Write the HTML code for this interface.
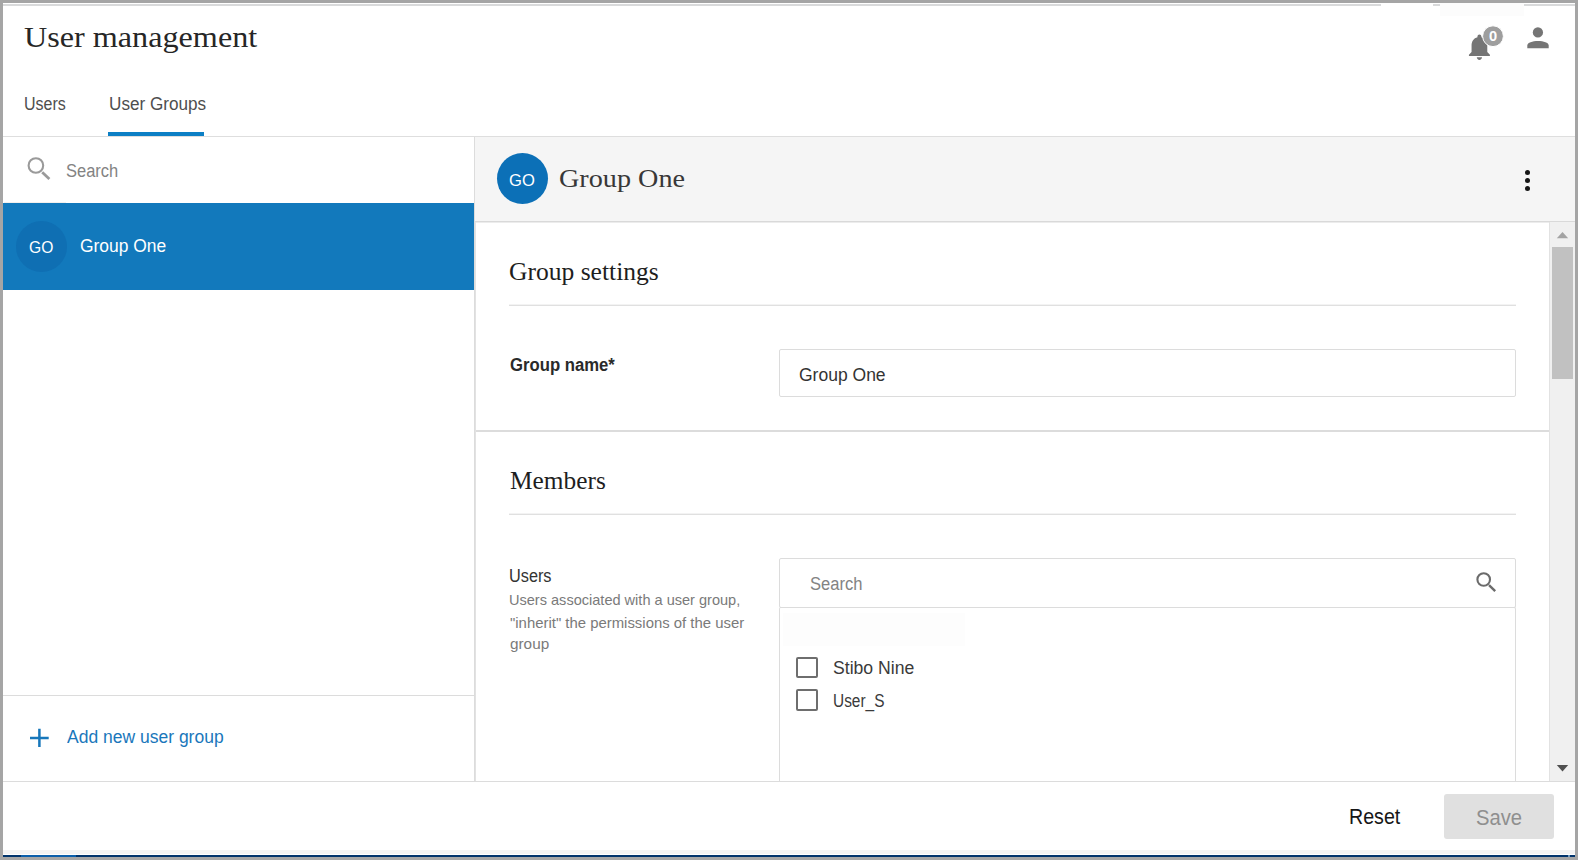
<!DOCTYPE html>
<html><head><meta charset="utf-8"><title>User management</title>
<style>
*{box-sizing:border-box;margin:0;padding:0}
html,body{width:1578px;height:860px;overflow:hidden;background:#a5a5a5;font-family:"Liberation Sans",sans-serif}
.r{position:absolute}
.t{position:absolute;white-space:pre;transform-origin:0 0}
</style></head><body>
<div class="r" style="left:3px;top:3px;width:1572px;height:854px;background:#fff"></div>
<!-- top strip lines -->
<div class="r" style="left:3px;top:4px;width:1378px;height:2px;background:#d9dadb"></div>
<div class="r" style="left:1433px;top:4px;width:7px;height:2px;background:#d9dadb"></div>
<div class="r" style="left:1524px;top:4px;width:51px;height:2px;background:#d9dadb"></div>
<div class="r" style="left:1440px;top:3px;width:84px;height:12.5px;background:#fcfcfc"></div>
<!-- header divider -->
<div class="r" style="left:3px;top:136px;width:1572px;height:1px;background:#dedede"></div>
<div class="r" style="left:108px;top:132px;width:96px;height:4px;background:#0c7fc5"></div>
<!-- left panel -->
<div class="r" style="left:474px;top:137px;width:1px;height:644px;background:#dcdcdc"></div>
<div class="r" style="left:4px;top:202px;width:62px;height:1px;background:#f3f0ed"></div>
<div class="r" style="left:3px;top:203px;width:471px;height:87px;background:#1279bc"></div>
<div class="r" style="left:15.9px;top:220.9px;width:50.7px;height:50.7px;border-radius:50%;background:#0f6fb3"></div>
<div class="r" style="left:3px;top:695px;width:471px;height:1px;background:#dcdcdc"></div>
<!-- right header -->
<div class="r" style="left:475px;top:137px;width:1100px;height:84px;background:#f5f5f5"></div>
<div class="r" style="left:475px;top:221px;width:1100px;height:1px;background:#d9d9d9"></div>
<div class="r" style="left:476px;top:222px;width:1073px;height:1px;background:#ececec"></div>
<div class="r" style="left:497px;top:153px;width:51px;height:51px;border-radius:50%;background:#0c70b7"></div>
<div class="r" style="left:1524.8px;top:170.4px;width:5px;height:5px;border-radius:50%;background:#161616"></div>
<div class="r" style="left:1524.8px;top:178.4px;width:5px;height:5px;border-radius:50%;background:#161616"></div>
<div class="r" style="left:1524.8px;top:186.4px;width:5px;height:5px;border-radius:50%;background:#161616"></div>
<!-- scrollbar -->
<div class="r" style="left:1549px;top:222px;width:26px;height:559px;background:#f0f0f0;border-left:1px solid #e2e2e2"></div>
<div class="r" style="left:1552px;top:247px;width:21px;height:132px;background:#c1c1c1"></div>
<svg class="r" style="left:1549px;top:222px" width="26" height="559">
  <path d="M7.8 16.2 L13.5 10 L19.2 16.2 Z" fill="#a3a3a3"/>
  <path d="M7.8 543 L13.5 549.5 L19.2 543 Z" fill="#505050"/>
</svg>
<!-- content -->
<div class="r" style="left:509px;top:304px;width:1007px;height:1px;background:#f3f3f3"></div>
<div class="r" style="left:509px;top:305px;width:1007px;height:1px;background:#e0e0e0"></div>
<div class="r" style="left:779px;top:349px;width:737px;height:48px;border:1px solid #dcdcdc;border-radius:2px"></div>
<div class="r" style="left:475px;top:430px;width:1074px;height:2px;background:#dcdcdc"></div>
<div class="r" style="left:475px;top:222px;width:1px;height:559px;background:#e2e2e2"></div>
<div class="r" style="left:509px;top:513px;width:1007px;height:1px;background:#f3f3f3"></div>
<div class="r" style="left:509px;top:514px;width:1007px;height:1px;background:#e0e0e0"></div>
<div class="r" style="left:779px;top:558px;width:737px;height:50px;border:1px solid #dcdcdc;border-radius:2px"></div>
<div class="r" style="left:779px;top:607px;width:737px;height:174px;border:1px solid #dcdcdc;border-bottom:none;border-radius:2px 2px 0 0"></div>
<div class="r" style="left:783px;top:613px;width:182px;height:33px;background:#fdfdfd"></div>
<div class="r" style="left:796px;top:657px;width:21.5px;height:21px;border:2px solid #6e6e6e;border-radius:2px"></div>
<div class="r" style="left:796px;top:689.3px;width:21.5px;height:21.3px;border:2px solid #6e6e6e;border-radius:2px"></div>
<svg class="r" style="left:1470px;top:566px" width="30" height="30">
  <circle cx="13.7" cy="13.5" r="6.3" fill="none" stroke="#6b6b6b" stroke-width="2.1"/>
  <path d="M19 19.2 L25.2 25.2" stroke="#6b6b6b" stroke-width="2.4"/>
</svg>
<!-- left search icon -->
<svg class="r" style="left:20px;top:150px" width="40" height="40">
  <circle cx="15.9" cy="15.5" r="7.3" fill="none" stroke="#9a9a9a" stroke-width="2.1"/>
  <path d="M22.2 22.2 L29.4 28.9" stroke="#9a9a9a" stroke-width="2.8"/>
</svg>
<!-- plus icon -->
<svg class="r" style="left:20px;top:720px" width="40" height="40">
  <path d="M19.4 8.7 V27 M10 17.9 H28.7" stroke="#1777bb" stroke-width="2.5"/>
</svg>
<!-- footer -->
<div class="r" style="left:3px;top:781px;width:1572px;height:1px;background:#dcdcdc"></div>
<div class="r" style="left:3px;top:850px;width:1572px;height:4px;background:#f3f3f3"></div>
<div class="r" style="left:3px;top:855px;width:1572px;height:2px;background:#00336b"></div>
<div class="r" style="left:21px;top:855px;width:55px;height:2px;background:#0a5eaa"></div>
<div class="r" style="left:1568px;top:855px;width:2px;height:2px;background:#6f98bd"></div>
<div class="r" style="left:1444px;top:794px;width:110px;height:45px;background:#e0e0e0;border-radius:3px"></div>
<!-- header icons -->
<svg class="r" style="left:1460px;top:20px" width="100" height="45" viewBox="1460 20 100 45">
  <g transform="translate(1463.7 31.1) scale(1.31)">
    <path d="M12 22c1.1 0 2-.9 2-2h-4c0 1.1.89 2 2 2zm6-6v-5c0-3.07-1.64-5.64-4.5-6.32V4c0-.83-.67-1.5-1.5-1.5s-1.5.67-1.5 1.5v.68C7.63 5.36 6 7.92 6 11v5l-2 2v1h16v-1l-2-2z" fill="#757575"/>
  </g>
  <circle cx="1493" cy="36.2" r="10.4" fill="#9e9e9e" stroke="#fff" stroke-width="1"/>
  <circle cx="1537.9" cy="32.4" r="5.15" fill="#757575"/>
  <path d="M1527.3 48.3 V45.4 C1527.3 42.5 1532.5 40.9 1538 40.9 C1543.5 40.9 1548.7 42.5 1548.7 45.4 V48.3 Z" fill="#757575"/>
</svg>
<div class="t" style="left:24.00px;top:16.51px;font:400 29px/41px 'Liberation Serif', serif;color:#262626;transform:scaleX(1.1096)">User management</div>
<div class="t" style="left:23.92px;top:91.74px;font:400 18px/25px 'Liberation Sans', sans-serif;color:#4e4e4e;transform:scaleX(0.8889)">Users</div>
<div class="t" style="left:108.70px;top:91.74px;font:400 18px/25px 'Liberation Sans', sans-serif;color:#4e4e4e;transform:scaleX(0.9520)">User Groups</div>
<div class="t" style="left:66.18px;top:158.70px;font:400 18px/25px 'Liberation Sans', sans-serif;color:#838383;transform:scaleX(0.9167)">Search</div>
<div class="t" style="left:28.70px;top:235.68px;font:400 16.5px/23px 'Liberation Sans', sans-serif;color:#ffffff;transform:scaleX(0.9463)">GO</div>
<div class="t" style="left:79.96px;top:234.46px;font:400 18px/25px 'Liberation Sans', sans-serif;color:#ffffff;transform:scaleX(0.9681)">Group One</div>
<div class="t" style="left:509.44px;top:169.06px;font:400 16.5px/23px 'Liberation Sans', sans-serif;color:#ffffff;transform:scaleX(1.0057)">GO</div>
<div class="t" style="left:559.20px;top:161.42px;font:400 26px/36px 'Liberation Serif', serif;color:#383838;transform:scaleX(1.0840)">Group One</div>
<div class="t" style="left:509.20px;top:254.70px;font:400 24.3px/34px 'Liberation Serif', serif;color:#1e1e1e;transform:scaleX(1.0516)">Group settings</div>
<div class="t" style="left:510.00px;top:353.34px;font:700 17.5px/24px 'Liberation Sans', sans-serif;color:#2a2a2a;transform:scaleX(0.9544)">Group name*</div>
<div class="t" style="left:799.20px;top:362.86px;font:400 18px/25px 'Liberation Sans', sans-serif;color:#333333;transform:scaleX(0.9725)">Group One</div>
<div class="t" style="left:510.00px;top:463.90px;font:400 24.3px/34px 'Liberation Serif', serif;color:#1e1e1e;transform:scaleX(1.0434)">Members</div>
<div class="t" style="left:509.20px;top:563.74px;font:400 17.5px/24px 'Liberation Sans', sans-serif;color:#333333;transform:scaleX(0.9302)">Users</div>
<div class="t" style="left:509.20px;top:590.48px;font:400 14.5px/20px 'Liberation Sans', sans-serif;color:#7a7a7a;transform:scaleX(1.0032)">Users associated with a user group,</div>
<div class="t" style="left:510.00px;top:612.78px;font:400 14.5px/20px 'Liberation Sans', sans-serif;color:#7a7a7a;transform:scaleX(1.0277)">"inherit" the permissions of the user</div>
<div class="t" style="left:510.00px;top:634.48px;font:400 14.5px/20px 'Liberation Sans', sans-serif;color:#7a7a7a;transform:scaleX(1.0567)">group</div>
<div class="t" style="left:810.20px;top:572.06px;font:400 18px/25px 'Liberation Sans', sans-serif;color:#838383;transform:scaleX(0.9203)">Search</div>
<div class="t" style="left:833.42px;top:655.66px;font:400 18px/25px 'Liberation Sans', sans-serif;color:#3a3a3a;transform:scaleX(0.9784)">Stibo Nine</div>
<div class="t" style="left:833.42px;top:689.16px;font:400 18px/25px 'Liberation Sans', sans-serif;color:#3a3a3a;transform:scaleX(0.8574)">User_S</div>
<div class="t" style="left:67.00px;top:725.26px;font:400 18px/25px 'Liberation Sans', sans-serif;color:#1a77bb;transform:scaleX(0.9723)">Add new user group</div>
<div class="t" style="left:1348.92px;top:800.98px;font:400 22px/31px 'Liberation Sans', sans-serif;color:#161616;transform:scaleX(0.8919)">Reset</div>
<div class="t" style="left:1476.42px;top:802.75px;font:400 21.5px/30px 'Liberation Sans', sans-serif;color:#8f8f8f;transform:scaleX(0.9407)">Save</div>
<div class="t" style="left:1489.10px;top:24.93px;font:700 15.5px/22px 'Liberation Sans', sans-serif;color:#ffffff;transform:scaleX(0.9443)">0</div>

</body></html>
